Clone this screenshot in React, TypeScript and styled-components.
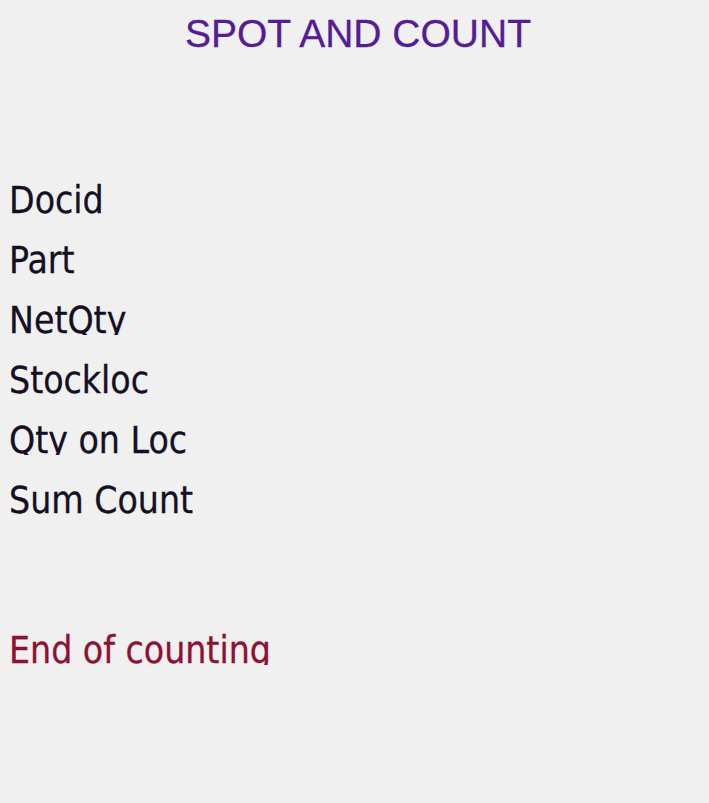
import styled, { createGlobalStyle } from 'styled-components';

const GlobalStyle = createGlobalStyle`
  html, body {
    margin: 0;
    padding: 0;
    background: #f0f0f0;
  }
`;

const Screen = styled.div`
  min-height: 803px;
  padding: 14px 0 0 9px;
  box-sizing: border-box;
  background: #f0f0f0;
  display: flex;
  flex-direction: column;
`;

const Title = styled.h1`
  margin: 0 0 129px;
  font-family: "Liberation Sans", Arial, sans-serif;
  font-weight: 400;
  font-size: 39px;
  line-height: 39px;
  color: #541c96;
  text-align: center;
  padding-right: 2px;
  -webkit-text-stroke: 0.3px #541c96;
`;

const FieldList = styled.div`
  display: flex;
  flex-direction: column;
  gap: 23px;
`;

const Label = styled.div<{ tone?: 'normal' | 'alert' }>`
  height: 37px;
  font-family: "DejaVu Sans Condensed", "DejaVu Sans", sans-serif;
  font-size: 37px;
  line-height: 37px;
  white-space: nowrap;
  clip-path: inset(0 0 4px 0);
  color: ${p => (p.tone === 'alert' ? '#8e1034' : '#141024')};
  -webkit-text-stroke: 0.3px currentColor;
`;

const Footer = styled.div`
  margin-top: 113px;
`;

const fields = ['Docid', 'Part', 'NetQty', 'Stockloc', 'Qty on Loc', 'Sum Count'];

export default function App() {
  return (
    <>
      <GlobalStyle />
      <Screen>
        <Title>SPOT AND COUNT</Title>
        <FieldList>
          {fields.map(f => (
            <Label key={f}>{f}</Label>
          ))}
        </FieldList>
        <Footer>
          <Label tone="alert">End of counting</Label>
        </Footer>
      </Screen>
    </>
  );
}
